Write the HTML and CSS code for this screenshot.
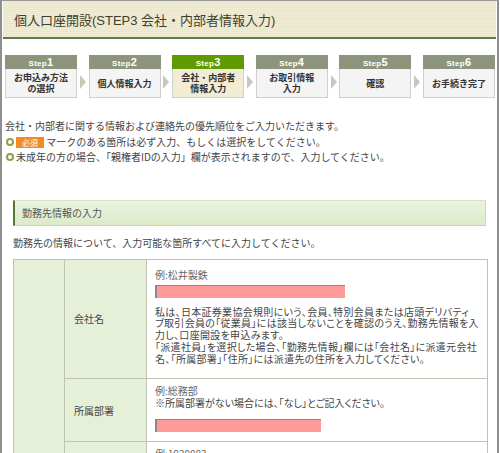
FILE: index.html
```html
<!DOCTYPE html>
<html lang="ja">
<head>
    <meta charset="UTF-8">
    <meta name="viewport" content="width=device-width, initial-scale=1.0">
    <title>個人口座開設 STEP3</title>
    <link rel="stylesheet" href="styles.css">
</head>
<body>
    <div class="frame">
        <div class="title-bar">
            <h1>個人口座開設(STEP3 会社・内部者情報入力)</h1>
        </div>

        <!-- progress steps -->
        <ol class="steps">
            <li class="step"><div class="step-head">Step<b>1</b></div><div class="step-body">お申込み方法<br>の選択</div></li>
            <li class="arrow"></li>
            <li class="step"><div class="step-head">Step<b>2</b></div><div class="step-body">個人情報入力</div></li>
            <li class="arrow"></li>
            <li class="step current"><div class="step-head">Step<b>3</b></div><div class="step-body">会社・内部者<br>情報入力</div></li>
            <li class="arrow"></li>
            <li class="step"><div class="step-head">Step<b>4</b></div><div class="step-body">お取引情報<br>入力</div></li>
            <li class="arrow"></li>
            <li class="step"><div class="step-head">Step<b>5</b></div><div class="step-body">確認</div></li>
            <li class="arrow"></li>
            <li class="step"><div class="step-head">Step<b>6</b></div><div class="step-body">お手続き完了</div></li>
        </ol>

        <div class="intro">
            <p>会社・内部者に関する情報および連絡先の優先順位をご入力いただきます。</p>
            <ul class="notes">
                <li><span class="req">必須</span> マークのある箇所は必ず入力、もしくは選択をしてください。</li>
                <li>未成年の方の場合、「親権者IDの入力」欄が表示されますので、入力してください。</li>
            </ul>
        </div>

        <div class="section">
            <h2 class="section-title">勤務先情報の入力</h2>
            <p class="lead">勤務先の情報について、入力可能な箇所すべてに入力してください。</p>

            <table class="form-table">
                <colgroup>
                    <col class="col-group">
                    <col class="col-label">
                    <col>
                </colgroup>
                <tr>
                    <th class="group" rowspan="3"></th>
                    <th class="label">会社名</th>
                    <td class="field">
                        <div class="example">例:松井製鉄</div>
                        <input class="text-input wide" type="text">
                        <p class="note">私は、日本証券業協会規則にいう、会員、特別会員または店頭デリバティ<br>ブ取引会員の「従業員」には該当しないことを確認のうえ、勤務先情報を入<br>力し、口座開設を申込みます。<br>「派遣社員」を選択した場合、「勤務先情報」欄には「会社名」に派遣元会社<br>名、「所属部署」「住所」には派遣先の住所を入力してください。</p>
                    </td>
                </tr>
                <tr>
                    <th class="label">所属部署</th>
                    <td class="field field-2">
                        <div class="example">例:総務部</div>
                        <div>※所属部署がない場合には、「なし」とご記入ください。</div>
                        <input class="text-input" type="text">
                    </td>
                </tr>
                <tr>
                    <th class="label"></th>
                    <td class="field field-3">
                        <div class="example">例:1020083</div>
                    </td>
                </tr>
            </table>
        </div>
    </div>
</body>
</html>
```

FILE: styles.css
```css
html, body {
    margin: 0;
    padding: 0;
    background: #fff;
}
body {
    font-family: "Noto Sans CJK JP", sans-serif;
    font-size: 10px;
    color: #444;
    width: 500px;
    height: 453px;
    overflow: hidden;
}
.frame {
    width: 499px;
    height: 453px;
    overflow: hidden;
    box-sizing: border-box;
    border-top: 1px solid #9a9a9a;
    border-left: 2px solid #8e8e8e;
    border-right: 2px solid #8e8e8e;
    padding: 0 1px;
}
.title-bar {
    height: 36px;
    background: #efead0;
    background-image: repeating-linear-gradient(0deg, #f1ecd4 0px, #f1ecd4 1px, #ece6c9 1px, #ece6c9 2px);
    border-bottom: 2px solid #66794a;
    display: flex;
    align-items: center;
    padding-left: 11px;
}
.title-bar h1 {
    margin: 0;
    font-family: "Liberation Sans", "Noto Sans CJK JP", sans-serif;
    font-size: 13px;
    font-weight: normal;
    color: #3f3f30;
}

/* steps */
.steps {
    list-style: none;
    margin: 16px 1px 0 2px;
    padding: 0;
    display: flex;
    justify-content: space-between;
    align-items: flex-end;
}
.step {
    width: 72px;
}
.step-head {
    height: 14px;
    background: #8c957b;
    color: #fff;
    font-family: "Liberation Sans", sans-serif;
    font-weight: bold;
    font-size: 8px;
    text-align: center;
    line-height: 14px;
    letter-spacing: 0.3px;
}
.step-head b {
    font-size: 11px;
}
.step-body {
    height: 28px;
    background: #f4f4f4;
    border: 1px solid #cfcfcf;
    border-top: none;
    display: flex;
    align-items: center;
    justify-content: center;
    text-align: center;
    font-size: 9px;
    font-weight: bold;
    line-height: 11px;
    color: #333;
}
.current .step-head {
    background: #5f9a03;
}
.current .step-body {
    background: #f1ecd3;
}
.arrow {
    width: 0;
    height: 0;
    border-left: 6px solid #c5c9ba;
    border-top: 7px solid transparent;
    border-bottom: 7px solid transparent;
    margin-bottom: 9px;
}

/* intro */
.intro {
    margin: 20px 0 0 2px;
    line-height: 15.5px;
}
.intro p {
    margin: 0;
}
.notes {
    list-style: none;
    margin: 0;
    padding: 0;
}
.notes li {
    position: relative;
    padding-left: 11px;
}
.notes li::before {
    content: "";
    position: absolute;
    left: 1px;
    top: 4px;
    width: 4px;
    height: 4px;
    border: 2px solid #8ea04a;
    border-radius: 50%;
}
.req {
    display: inline-block;
    background: #f08c22;
    color: #fff;
    font-size: 8px;
    line-height: 11px;
    padding: 0 6px;
}

/* section */
.section {
    margin: 35px 10px 0 10px;
}
.section-title {
    margin: 0;
    height: 24px;
    line-height: 24px;
    font-size: 10px;
    font-weight: normal;
    color: #555;
    padding-left: 7px;
    background: linear-gradient(#e9f3df, #dcebc9);
    border-left: 2px solid #5a7634;
    border-top: 1px solid #d9e4cc;
    border-right: 1px solid #d0d9c4;
    border-bottom: 1px solid #c9d1bd;
}
.lead {
    margin: 9px 0 0 0;
    line-height: 16px;
}

.form-table {
    margin-top: 8px;
    width: 475px;
    table-layout: fixed;
    border-collapse: collapse;
    border: 1px solid #bdc4b1;
}
.col-group {
    width: 51px;
}
.col-label {
    width: 82px;
}
.form-table th, .form-table td {
    border: 1px solid #bdc4b1;
    text-align: left;
    vertical-align: middle;
    font-weight: normal;
}
.group {
    background: #e6f0d8;
}
.label {
    padding-left: 9px;
    background: #e6f0d8;
    color: #444;
}
.field {
    padding: 9px 0 14px 8px;
    vertical-align: top;
    line-height: 12px;
    white-space: nowrap;
    overflow: hidden;
    font-feature-settings: "palt";
}
.field-2 {
    padding: 6px 0 9px 8px;
}
.field-3 {
    padding: 6px 0 20px 8px;
}
.example {
    color: #666;
}
.text-input {
    display: block;
    box-sizing: border-box;
    width: 166px;
    height: 13px;
    margin: 10px 0 0 0;
    padding: 0;
    background: #ff9a9a;
    border: none;
    border-left: 2px solid #8a8a8a;
    border-top: 1px solid #8a8a8a;
}
.text-input.wide {
    width: 190px;
    margin-top: 4px;
}
.note {
    margin: 8px 0 0 0;
    color: #444;
    letter-spacing: 0.3px;
    line-height: 11.8px;
}
```
